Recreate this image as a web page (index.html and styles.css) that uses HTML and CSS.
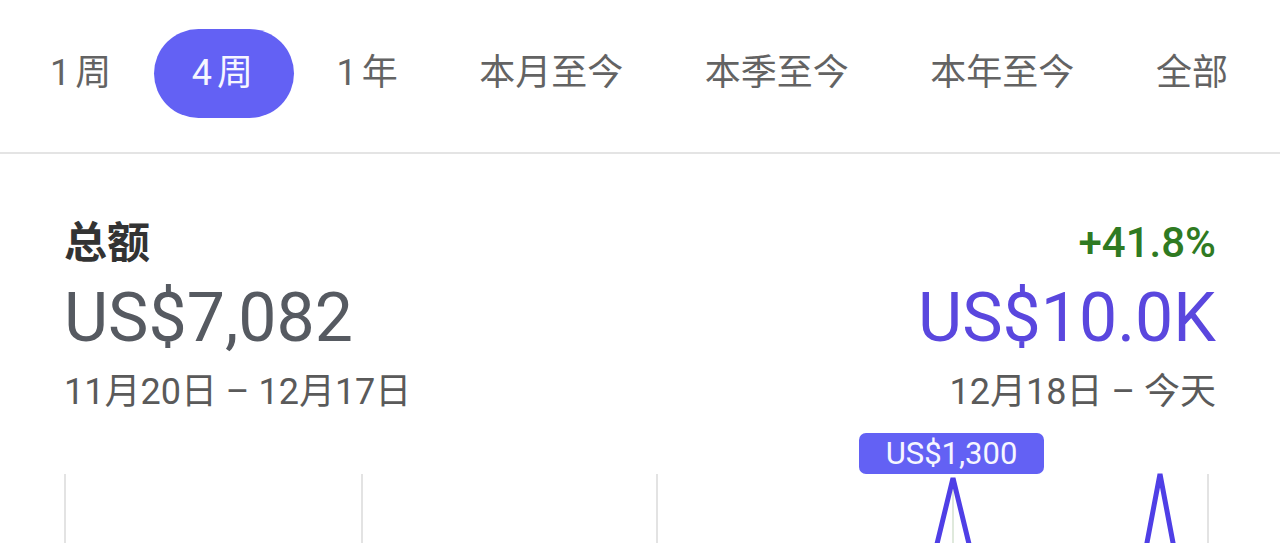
FILE: index.html
```html
<!DOCTYPE html>
<html lang="zh-CN">
<head>
    <meta charset="UTF-8">
    <meta name="viewport" content="width=device-width, initial-scale=1.0">
    <title>总额</title>
    <link rel="stylesheet" href="styles.css">
</head>
<body>
    <nav class="tabs">
        <span class="tab">1 周</span>
        <span class="tab active">4 周</span>
        <span class="tab">1 年</span>
        <span class="tab">本月至今</span>
        <span class="tab">本季至今</span>
        <span class="tab">本年至今</span>
        <span class="tab">全部</span>
    </nav>

    <section class="summary">
        <div class="col">
            <div class="label">总额</div>
            <div class="amount">US$7,082</div>
            <div class="range">11月20日 – 12月17日</div>
        </div>
        <div class="col right">
            <div class="change">+41.8%</div>
            <div class="amount current">US$10.0K</div>
            <div class="range">12月18日 – 今天</div>
        </div>
    </section>

    <div class="chart">
        <div class="tooltip">US$1,300</div>
        <svg class="plot" width="1280" height="113" viewBox="0 0 1280 113">
            <g stroke="#e3e3e3" stroke-width="2">
                <line x1="65" y1="44" x2="65" y2="113" />
                <line x1="362" y1="44" x2="362" y2="113" />
                <line x1="657" y1="44" x2="657" y2="113" />
                <line x1="1208" y1="44" x2="1208" y2="113" />
            </g>
            <line x1="953" y1="50" x2="953" y2="113" stroke="#dfe9dc" stroke-width="2" />
            <polyline points="936,118 953,48 970,118" fill="none" stroke="#4f3fe6" stroke-width="5" stroke-linejoin="miter" />
            <polyline points="1146,118 1160,44 1174,118" fill="none" stroke="#4f3fe6" stroke-width="5" stroke-linejoin="miter" />
        </svg>
    </div>
</body>
</html>
```

FILE: styles.css
```css
body {
    margin: 0;
    background: #fff;
    font-family: Roboto, "Noto Sans CJK SC", sans-serif;
    color: #5c5c5c;
}

.tabs {
    display: flex;
    justify-content: space-between;
    align-items: center;
    padding: 29px 13px 34px 11px;
    border-bottom: 2px solid #e4e4e4;
}

.tab {
    height: 89px;
    line-height: 89px;
    padding: 0 39px;
    font-size: 36px;
    word-spacing: -4px;
    color: #636363;
    border-radius: 45px;
    white-space: nowrap;
}

.tab.active {
    padding: 0 41px 0 38px;
    background: #6361f4;
    color: #f6f6ff;
}

.summary {
    display: flex;
    justify-content: space-between;
    padding: 58px 64px 0 64px;
}

.col {
    display: flex;
    flex-direction: column;
}

.col.right {
    align-items: flex-end;
}

.label {
    font-size: 43px;
    font-weight: 700;
    line-height: 62px;
    color: #333;
}

.change {
    font-size: 42px;
    font-weight: 500;
    line-height: 62px;
    color: #2f7a22;
}

.amount {
    font-size: 68px;
    line-height: 88px;
    color: #565a61;
}

.amount.current {
    color: #5a47de;
}

.range {
    font-size: 36px;
    line-height: 60px;
    color: #5a5a5a;
}

.chart {
    position: relative;
    margin-top: 8px;
    height: 113px;
    overflow: hidden;
}

.plot {
    display: block;
}

.tooltip {
    position: absolute;
    left: 859px;
    top: 3px;
    width: 185px;
    height: 41px;
    line-height: 41px;
    text-align: center;
    background: #6361f4;
    color: #f6f6ff;
    font-size: 31px;
    border-radius: 7px;
}
```
